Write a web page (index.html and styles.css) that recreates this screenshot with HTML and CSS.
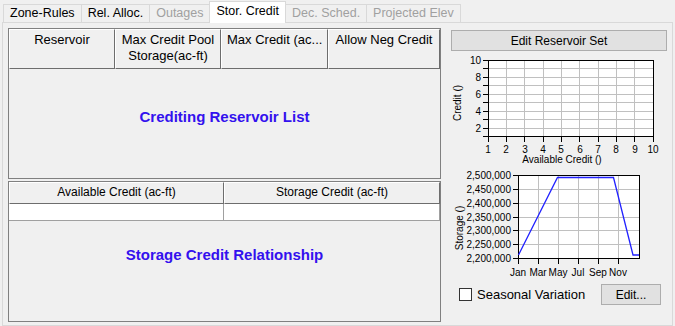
FILE: index.html
```html
<!DOCTYPE html>
<html>
<head>
  <title>Storage Credit</title>
  <meta charset="UTF-8">
  <link rel="stylesheet" href="styles.css">
</head>
<body>
  <div class="tabs">
    <div class="tab">Zone-Rules</div>
    <div class="tab">Rel. Alloc.</div>
    <div class="tab disabled">Outages</div>
    <div class="tab active">Stor. Credit</div>
    <div class="tab disabled">Dec. Sched.</div>
    <div class="tab disabled">Projected Elev</div>
  </div>
  <div class="panel">
    <div class="left">
      <div class="grid-box top-box">
        <div class="hdr-row tall">
          <div class="hdr col-a">Reservoir</div>
          <div class="hdr col-b">Max Credit Pool<br>Storage(ac-ft)</div>
          <div class="hdr col-c">Max Credit (ac...</div>
          <div class="hdr col-d">Allow Neg Credit</div>
        </div>
        <div class="box-body list-body">
          <span class="big-label">Crediting Reservoir List</span>
        </div>
      </div>
      <div class="grid-box bottom-box">
        <div class="hdr-row short">
          <div class="hdr col-wide">Available Credit (ac-ft)</div>
          <div class="hdr col-rest">Storage Credit (ac-ft)</div>
        </div>
        <div class="data-row">
          <div class="cell col-wide"></div>
          <div class="cell col-rest"></div>
        </div>
        <div class="box-body rel-body">
          <span class="big-label">Storage Credit Relationship</span>
        </div>
      </div>
    </div>
    <div class="right">
      <button class="btn set-btn">Edit Reservoir Set</button>
      <svg class="chart chart-top" width="225" height="114" viewBox="0 0 225 114">
        <rect x="43" y="6" width="165" height="77" fill="#fff"/>
        <path class="grid" d="M61.5 6V83M79.5 6V83M98.5 6V83M116.5 6V83M134.5 6V83M153.5 6V83M171.5 6V83M189.5 6V83M43 14.5H208M43 23.5H208M43 31.5H208M43 40.5H208M43 48.5H208M43 57.5H208M43 65.5H208M43 74.5H208"/>
        <rect class="frame" x="43.5" y="6.5" width="165" height="76"/>
        <path class="ticks" d="M38 6.5H43M38 14.5H43M38 23.5H43M38 31.5H43M38 40.5H43M38 48.5H43M38 57.5H43M38 65.5H43M38 74.5H43M38 82.5H43M43.5 83V88M61.5 83V88M79.5 83V88M98.5 83V88M116.5 83V88M134.5 83V88M153.5 83V88M171.5 83V88M189.5 83V88M208.5 83V88"/>
        <text x="36" y="10" text-anchor="end">10</text>
        <text x="36" y="27" text-anchor="end">8</text>
        <text x="36" y="44" text-anchor="end">6</text>
        <text x="36" y="61" text-anchor="end">4</text>
        <text x="36" y="78" text-anchor="end">2</text>
        <text x="43" y="99" text-anchor="middle">1</text>
        <text x="61" y="99" text-anchor="middle">2</text>
        <text x="80" y="99" text-anchor="middle">3</text>
        <text x="98" y="99" text-anchor="middle">4</text>
        <text x="116" y="99" text-anchor="middle">5</text>
        <text x="135" y="99" text-anchor="middle">6</text>
        <text x="153" y="99" text-anchor="middle">7</text>
        <text x="171" y="99" text-anchor="middle">8</text>
        <text x="190" y="99" text-anchor="middle">9</text>
        <text x="208" y="99" text-anchor="middle">10</text>
        <text x="117" y="109" text-anchor="middle">Available Credit ()</text>
        <text transform="translate(16 49) rotate(-90)" text-anchor="middle">Credit ()</text>
      </svg>
      <svg class="chart" width="225" height="114" viewBox="0 0 225 114">
        <rect x="73" y="7" width="121" height="84" fill="#fff"/>
        <path class="grid" d="M93.5 7V91M113.5 7V91M133.5 7V91M153.5 7V91M173.5 7V91M73 21.5H194M73 35.5H194M73 49.5H194M73 62.5H194M73 76.5H194"/>
        <rect class="frame" x="73.5" y="7.5" width="121" height="83"/>
        <path class="ticks" d="M68 7.5H73M68 21.5H73M68 35.5H73M68 49.5H73M68 62.5H73M68 76.5H73M68 90.5H73M73.5 91V96M93.5 91V96M113.5 91V96M133.5 91V96M153.5 91V96M173.5 91V96"/>
        <polyline class="line" points="73.5,87 112.5,9.5 168.5,9.5 188,87 194,87"/>
        <text x="66" y="11" text-anchor="end">2,500,000</text>
        <text x="66" y="25" text-anchor="end">2,450,000</text>
        <text x="66" y="39" text-anchor="end">2,400,000</text>
        <text x="66" y="53" text-anchor="end">2,350,000</text>
        <text x="66" y="66" text-anchor="end">2,300,000</text>
        <text x="66" y="80" text-anchor="end">2,250,000</text>
        <text x="66" y="94" text-anchor="end">2,200,000</text>
        <text x="73" y="108" text-anchor="middle">Jan</text>
        <text x="93" y="108" text-anchor="middle">Mar</text>
        <text x="113" y="108" text-anchor="middle">May</text>
        <text x="133" y="108" text-anchor="middle">Jul</text>
        <text x="153" y="108" text-anchor="middle">Sep</text>
        <text x="173" y="108" text-anchor="middle">Nov</text>
        <text transform="translate(18 60) rotate(-90)" text-anchor="middle">Storage ()</text>
      </svg>
      <div class="opts">
        <label class="check"><span class="box13"></span>Seasonal Variation</label>
        <button class="btn edit-btn">Edit...</button>
      </div>
    </div>
  </div>
</body>
</html>
```

FILE: styles.css
```css
body {
  margin: 0;
  width: 675px;
  height: 326px;
  overflow: hidden;
  background-color: #f0f0f0;
  font-family: "Liberation Sans", Arial, sans-serif;
  font-size: 12px;
  color: #000;
}
.tabs {
  display: flex;
  align-items: flex-end;
  height: 22px;
  padding-left: 3px;
}
.tab {
  box-sizing: border-box;
  height: 18px;
  line-height: 17px;
  padding: 0 6px;
  margin-right: -1px;
  border: 1px solid #d9d9d9;
  border-bottom: none;
  background-color: #f0f0f0;
  font-size: 12.5px;
  white-space: nowrap;
}
.tab.disabled {
  color: #a0a0a0;
}
.tab.active {
  position: relative;
  z-index: 1;
  height: 22px;
  line-height: 19px;
  margin-bottom: -1px;
  background-color: #fff;
}
.panel {
  box-sizing: border-box;
  display: flex;
  gap: 4px;
  width: 671px;
  height: 304px;
  margin-left: 2px;
  padding: 5px 2px 0 5px;
  border: 1px solid #d9d9d9;
}
.left {
  display: flex;
  flex-direction: column;
  gap: 2px;
  width: 433px;
}
.grid-box {
  box-sizing: border-box;
  display: flex;
  flex-direction: column;
  border: 1px solid #808080;
}
.top-box {
  height: 151px;
}
.bottom-box {
  height: 141px;
}
.hdr-row {
  display: flex;
  flex-shrink: 0;
}
.hdr-row.tall {
  height: 40px;
}
.hdr-row.short {
  height: 22px;
}
.hdr {
  box-sizing: border-box;
  border: 1px solid;
  border-color: #fff #6d6d6d #6d6d6d #fff;
  text-align: center;
  white-space: nowrap;
  overflow: hidden;
}
.tall .hdr {
  font-size: 13px;
  line-height: 16px;
  padding-top: 2px;
}
.short .hdr {
  line-height: 19px;
}
.col-a, .col-b {
  width: 106px;
}
.col-c {
  width: 107px;
  text-align: left;
  padding-left: 5px;
}
.col-d {
  flex: 1;
}
.col-wide {
  width: 215px;
}
.col-rest {
  flex: 1;
}
.data-row {
  display: flex;
  flex-shrink: 0;
  height: 17px;
}
.cell {
  box-sizing: border-box;
  background-color: #fff;
  border-right: 1px solid #a0a0a0;
  border-bottom: 1px solid #a0a0a0;
}
.box-body {
  flex: 1;
  text-align: center;
}
.list-body {
  padding-top: 39px;
}
.rel-body {
  padding-top: 25px;
}
.big-label {
  font-size: 15px;
  line-height: 18px;
  font-weight: bold;
  color: #3311ee;
}
.right {
  display: flex;
  flex-direction: column;
  width: 225px;
  padding-top: 2px;
}
.btn {
  box-sizing: border-box;
  height: 21px;
  padding: 0;
  background-color: #e1e1e1;
  border: 1px solid #adadad;
  font-family: "Liberation Sans", Arial, sans-serif;
  font-size: 12px;
  color: #000;
}
.set-btn {
  width: 216px;
  margin-left: 6px;
}
.chart {
  display: block;
}
.chart-top {
  margin-top: 3px;
}
.chart text {
  font-family: "Liberation Sans", Arial, sans-serif;
  font-size: 10px;
  fill: #000;
}
.grid {
  stroke: #c0c0c0;
  stroke-width: 1;
  fill: none;
  shape-rendering: crispEdges;
}
.frame, .ticks {
  stroke: #000;
  stroke-width: 1;
  fill: none;
  shape-rendering: crispEdges;
}
.line {
  stroke: #2222ff;
  stroke-width: 1.3;
  fill: none;
}
.opts {
  display: flex;
  align-items: center;
  height: 21px;
  margin-top: 2px;
}
.check {
  display: flex;
  align-items: center;
  gap: 5px;
  margin-left: 14px;
  font-size: 13px;
}
.box13 {
  box-sizing: border-box;
  width: 13px;
  height: 13px;
  background-color: #fff;
  border: 1px solid #333;
}
.edit-btn {
  width: 60px;
  margin-left: auto;
  margin-right: 9px;
}
```
